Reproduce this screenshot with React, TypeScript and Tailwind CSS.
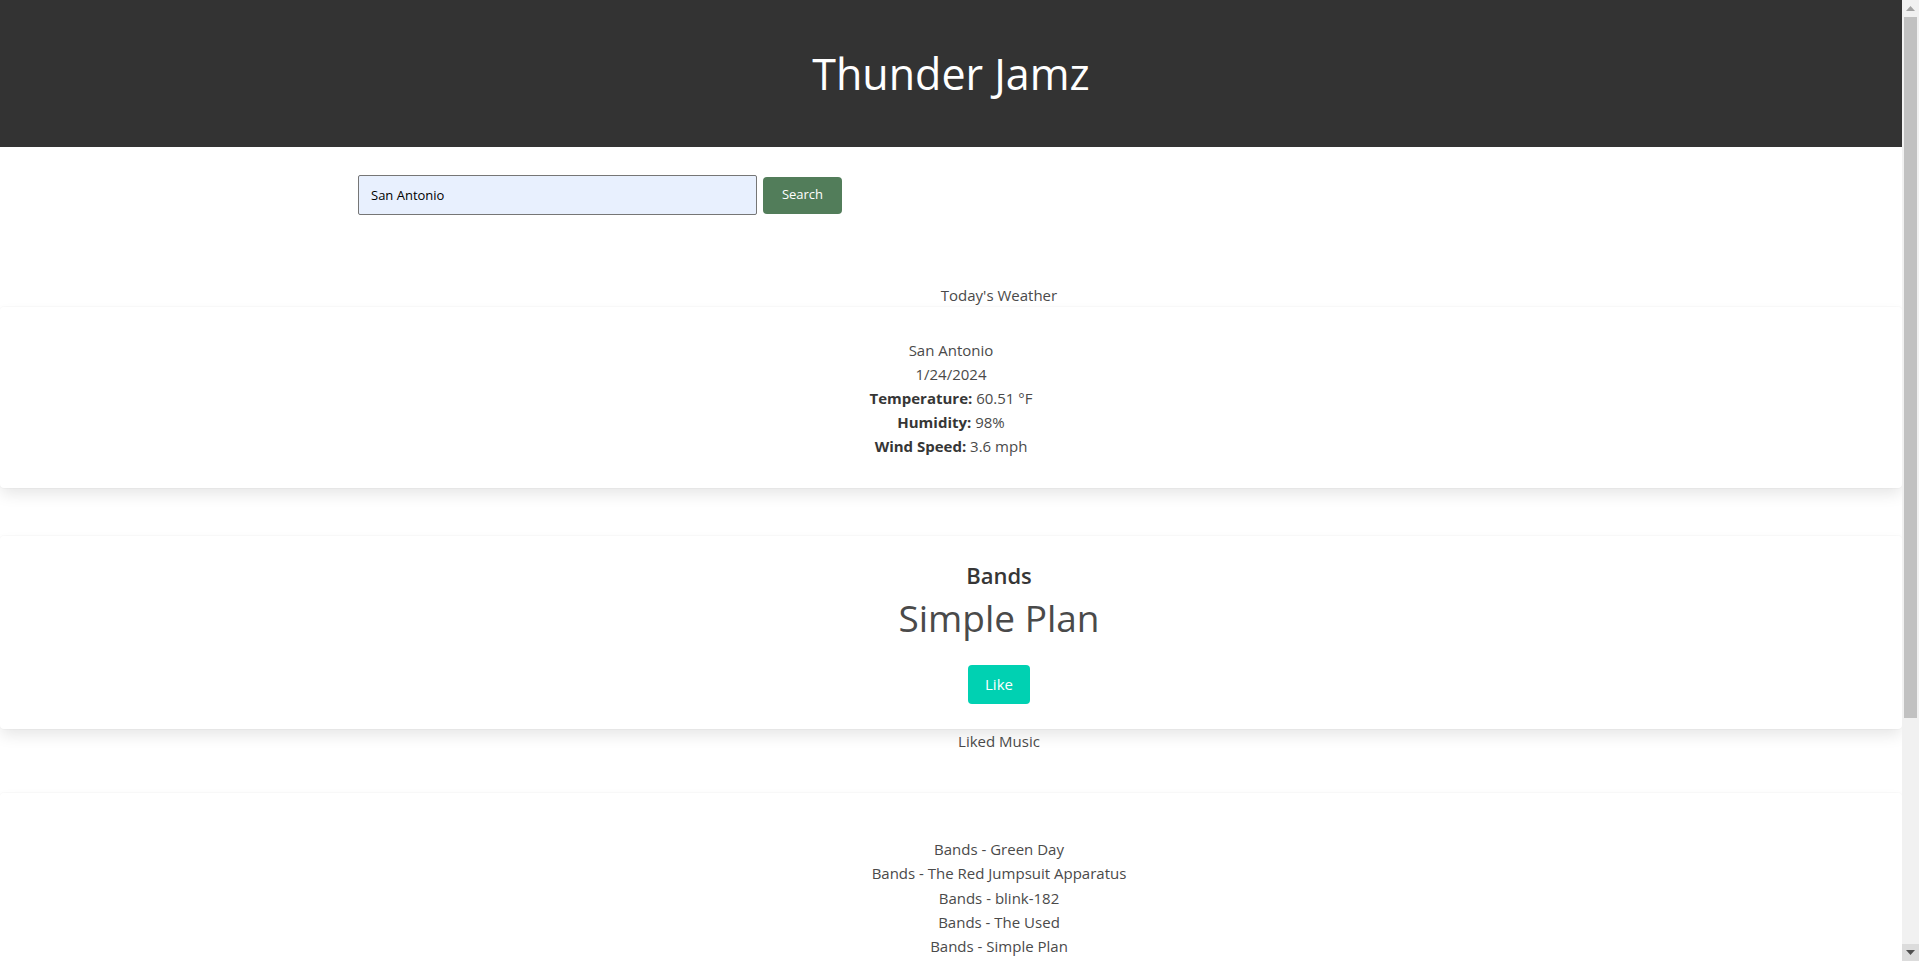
import React from "react";

const font = { fontFamily: '"Open Sans", "Noto Sans", sans-serif' };

const cardShadow =
  "shadow-[0_0.5em_1em_-0.125em_rgba(10,10,10,0.1),0_0_0_1px_rgba(10,10,10,0.02)]";

function Scrollbar() {
  return (
    <div className="fixed right-0 top-0 h-screen w-[17px] bg-[#f1f1f1] flex flex-col items-center">
      <div className="h-[17px] w-full flex items-center justify-center">
        <svg width="9" height="5" viewBox="0 0 9 5">
          <path d="M0 5 L4.5 0 L9 5 Z" fill="#a3a3a3" />
        </svg>
      </div>
      <div className="w-[13px] h-[701px] bg-[#c1c1c1]" />
      <div className="flex-1" />
      <div className="h-[17px] w-full flex items-center justify-center bg-[#dcdcdc]">
        <svg width="9" height="5" viewBox="0 0 9 5">
          <path d="M0 0 L9 0 L4.5 5 Z" fill="#505050" />
        </svg>
      </div>
    </div>
  );
}

export default function App() {
  const liked = [
    "Bands - Green Day",
    "Bands - The Red Jumpsuit Apparatus",
    "Bands - blink-182",
    "Bands - The Used",
    "Bands - Simple Plan",
  ];
  return (
    <div className="min-h-[1270px] bg-white text-[#4a4a4a] text-[15px]" style={font}>
      <div className="mr-[17px]">
        <header className="h-[147px] bg-[#333333] flex items-center justify-center">
          <h1 className="text-[43px] leading-none text-white font-normal">Thunder Jamz</h1>
        </header>

        <form
          className="pl-[358px] pt-[28px] flex items-center gap-[6px]"
          onSubmit={(e) => e.preventDefault()}
        >
          <input
            defaultValue="San Antonio"
            className="w-[399px] h-[40px] bg-[#e8f0fe] border border-[#767676] rounded-[2px] px-[12px] text-[13px] text-black outline-none"
            style={font}
          />
          <button className="w-[79px] h-[37px] bg-[#527d5a] rounded-[4px] text-white text-[13px]">
            Search
          </button>
        </form>

        <div className="pt-[69px] pl-[96px] text-center leading-[23px]">Today's Weather</div>

        <section
          className={`rounded-[4px] bg-white ${cardShadow} pt-[31px] pb-[30px] text-center leading-[24px]`}
        >
          <div>San Antonio</div>
          <div>1/24/2024</div>
          <div>
            <strong className="font-bold text-[#363636]">Temperature:</strong> 60.51 °F
          </div>
          <div>
            <strong className="font-bold text-[#363636]">Humidity:</strong> 98%
          </div>
          <div>
            <strong className="font-bold text-[#363636]">Wind Speed:</strong> 3.6 mph
          </div>
        </section>

        <section
          className={`mt-[48px] rounded-[4px] bg-white ${cardShadow} pt-[24px] pb-[25px] pl-[96px] flex flex-col items-center`}
        >
          <h3 className="text-[22px] leading-[30px] font-semibold text-[#363636]">Bands</h3>
          <div className="mt-[4px] text-[37px] leading-[48px]">Simple Plan</div>
          <button className="mt-[23px] w-[62px] h-[39px] bg-[#00d1b2] rounded-[4px] text-white text-[15px]">
            Like
          </button>
        </section>

        <div className="pl-[96px] text-center leading-[24px]">Liked Music</div>

        <section
          className={`mt-[40px] rounded-[4px] bg-white ${cardShadow} pt-[44px] pb-[300px] pl-[96px] text-center leading-[24.3px]`}
        >
          {liked.map((l) => (
            <div key={l}>{l}</div>
          ))}
        </section>
      </div>
      <Scrollbar />
    </div>
  );
}
